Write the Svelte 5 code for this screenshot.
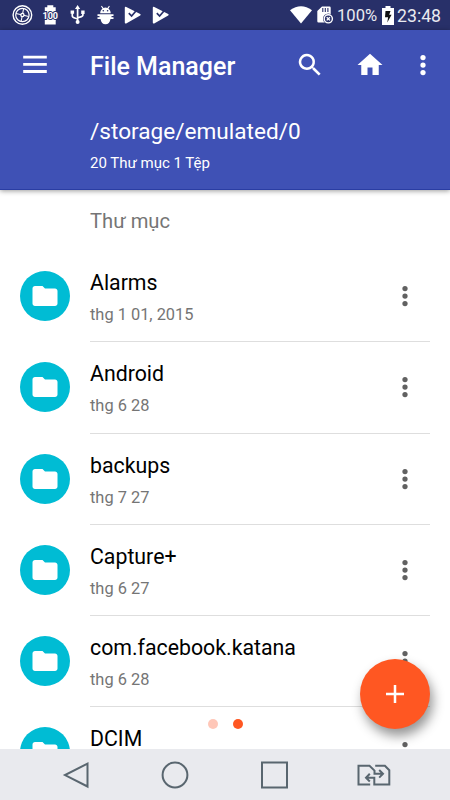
<script lang="ts">
  interface FileEntry {
    readonly name: string;
    readonly modified: string;
  }

  const entries: FileEntry[] = [
    { name: "Alarms", modified: "thg 1 01, 2015" },
    { name: "Android", modified: "thg 6 28" },
    { name: "backups", modified: "thg 7 27" },
    { name: "Capture+", modified: "thg 6 27" },
    { name: "com.facebook.katana", modified: "thg 6 28" },
    { name: "DCIM", modified: "thg 6 28" },
  ];

  let page = $state(1);
</script>

{#snippet more()}
  <svg viewBox="0 0 24 24" width="30" height="30" fill="currentColor">
    <circle cx="12" cy="6" r="2.1" />
    <circle cx="12" cy="12" r="2.1" />
    <circle cx="12" cy="18" r="2.1" />
  </svg>
{/snippet}

{#snippet playCheck()}
  <svg viewBox="0 0 24 24" width="24" height="24">
    <path d="M4.8 5q0-1.700 1.500-1L20.200 11q1.100.700 0 1.400L6.200 20.400q-1.400.6-1.400-.8z" fill="#fff" />
    <path d="M8.800 10.200l2.800 2.800 5.200-6" fill="none" stroke="#283069" stroke-width="1.700" />
  </svg>
{/snippet}

<div class="screen">
  <div class="status">
    <div class="notifications">
      <svg viewBox="0 0 24 24" width="24" height="24" fill="none" stroke="#fff">
        <circle cx="12.4" cy="12" r="9.300" stroke-width="1.400" />
        <circle cx="12.4" cy="12" r="6.700" stroke-width="1.200" />
        <path d="M12.4 12L13.600 5.500M12.4 12l6.300 1.500M12.4 12l-1.300 6.500M12.4 12L6 10.500" stroke-width="1.100" />
        <circle cx="12.4" cy="12" r="2.200" fill="#fff" stroke="none" />
        <circle cx="12.4" cy="12" r=".9" fill="#283069" stroke="none" />
      </svg>
      <svg viewBox="0 0 24 24" width="24" height="24">
        <path d="M9.300 2.300h6v2h2.400v4H6.800v-4h2.500zM6.800 16.800h10.900v4.700H6.800z" fill="#fff" />
        <path d="M7 8h10.500v9.500H7z" fill="#fff" />
        <text x="12.300" y="15.700" text-anchor="middle">100</text>
      </svg>
      <svg viewBox="0 0 24 24" width="24" height="24" fill="none" stroke="#fff" stroke-width="1.700">
        <path d="M12.600 4.500v15M12.600 16.500c0-1.500-5.300-1-5.300-3.500V9M12.600 15.500c0-1.700 5.300-1 5.300-3.500V8" />
        <path d="M12.600 2l2.600 4h-5.200zM5.600 7.500h3.500v3.300H5.600zM16.200 7.500h3.400v3.400h-3.400z" fill="#fff" stroke="none" />
        <circle cx="12.600" cy="19" r="2" fill="#fff" stroke="none" />
      </svg>
      <svg viewBox="0 0 24 24" width="24" height="24" fill="#fff">
        <path d="M7.200 10.200c0-2.200 1-3.700 2.300-4.500L8 3.300l.8-.6 1.700 2.200q1.900-.6 3.900 0L16 2.700l.8.6-1.400 2.400c1.400.8 2.300 2.300 2.300 4.500zM4.500 11.300h16v1.800h-16zM4.500 14.200h16v1.900h-3c-.5 3.500-2.300 5.200-5 5.200s-4.500-1.700-5-5.200h-3z" />
        <path d="M6.500 13h12v2h-12z" />
        <circle cx="10.300" cy="7.800" r=".8" fill="#283069" />
        <circle cx="14.600" cy="7.800" r=".8" fill="#283069" />
      </svg>
      {@render playCheck()}
      {@render playCheck()}
    </div>
    <svg class="wifi" viewBox="0 0 22 18" width="22" height="18">
      <path d="M0 4.200Q11-3.600 22 4.200L11 17.500z" fill="#fff" />
    </svg>
    <svg class="sd" viewBox="0 0 17 18" width="17" height="18">
      <path d="M5 .5h7.500q1.200 0 1.200 1.200V9H8v7.500H1.500Q.3 16.500.3 15.300V5z" fill="#fff" />
      <path d="M5.800 2v4M8.300 2v4M10.900 2v4" stroke="#283069" stroke-width="1.100" />
      <circle cx="11.300" cy="12.800" r="5.300" fill="#283069" />
      <circle cx="11.300" cy="12.800" r="4.100" fill="none" stroke="#fff" stroke-width="1.400" />
      <path d="M9.700 11.200l3.200 3.200M12.900 11.200l-3.200 3.200" stroke="#fff" stroke-width="1.300" />
    </svg>
    <span class="percent">100%</span>
    <svg class="battery" viewBox="0 0 12 19" width="12" height="19">
      <path d="M3.500 0h5v2H12v17H0V2h3.500z" fill="#fff" />
      <path d="M3.500 5h5l-1.300 3.700h2.400L5.300 16.500l.8-5.300H3z" fill="#111" />
    </svg>
    <span class="clock">23:48</span>
  </div>

  <header class="header">
    <div class="toolbar">
      <button class="icon-button" aria-label="Menu">
        <svg viewBox="0 0 30 30" width="30" height="30" fill="#fff">
          <path d="M3.200 5.700h23.600v2.900H3.200zM3.200 12.900h23.600v2.900H3.200zM3.200 20.100h23.600V23H3.200z" />
        </svg>
      </button>
      <h1>File Manager</h1>
      <button class="icon-button search" aria-label="Search">
        <svg viewBox="0 0 24 24" width="30" height="30" fill="#fff">
          <path d="M15.500 14h-.79l-.28-.27A6.500 6.500 0 1 0 13.730 14.430l.27.28v.79l5 4.990L20.490 19l-4.990-5zm-6 0a4.500 4.500 0 1 1 0-9 4.500 4.500 0 0 1 0 9z" />
        </svg>
      </button>
      <button class="icon-button home" aria-label="Home">
        <svg viewBox="0 0 24 24" width="30" height="30" fill="#fff">
          <path d="M10 20v-6h4v6h5v-8h3L12 3 2 12h3v8z" />
        </svg>
      </button>
      <button class="icon-button overflow" aria-label="More">{@render more()}</button>
    </div>
    <div class="path">/storage/emulated/0</div>
    <div class="summary">20 Thư mục 1 Tệp</div>
  </header>

  <main class="content">
    <h2>Thư mục</h2>
    <ul>
      {#each entries as entry (entry.name)}
        <li>
          <span class="folder">
            <svg viewBox="0 0 24 24" width="30" height="30" fill="#fff">
              <path d="M10 4H4c-1.100 0-2 .9-2 2v12c0 1.100.9 2 2 2h16c1.100 0 2-.9 2-2V8c0-1.100-.9-2-2-2h-8z" />
            </svg>
          </span>
          <div class="details">
            <div class="labels">
              <div class="name">{entry.name}</div>
              <div class="date">{entry.modified}</div>
            </div>
            <button class="icon-button item-more" aria-label="Options">{@render more()}</button>
          </div>
        </li>
      {/each}
    </ul>

    <div class="pager">
      {#each [0, 1] as index (index)}
        <button class:active={page === index} aria-label="Page" onclick={() => (page = index)}></button>
      {/each}
    </div>
    <button class="fab" aria-label="Add">
      <svg viewBox="0 0 24 24" width="30" height="30" fill="#fff">
        <path d="M19.200 13h-6.200v6.200h-2V13H4.800v-2H11V4.800h2V11h6.200z" />
      </svg>
    </button>
  </main>

  <nav class="navbar">
    <svg viewBox="0 0 34 30" width="34" height="30">
      <path d="M28.500 3.700v22.800L6 15.100z" />
    </svg>
    <svg viewBox="0 0 34 30" width="34" height="30">
      <circle cx="17" cy="15" r="12.400" />
    </svg>
    <svg viewBox="0 0 34 30" width="34" height="30">
      <path d="M4 2.500H29V27.500H4z" />
    </svg>
    <svg viewBox="0 0 34 30" width="34" height="30">
      <path d="M13.200 24.400H1.500V5.700h11l5 4.900v3.200h8M22.200 10l3.800 3.800-3.800 3.800M18.200 5.700h9.700l4.400 4.500v14.200H17.300v-6.700H9M12.800 13.800L9 17.700l3.800 3.800" />
    </svg>
  </nav>
</div>

<style>
  :global(body) {
    margin: 0;
    background: #fff;
  }

  .screen {
    display: flex;
    flex-direction: column;
    width: 450px;
    height: 800px;
    overflow: hidden;
    font-family: Roboto, "Noto Sans", sans-serif;
    color: #000;
    background: #fff;
  }

  svg {
    display: block;
    flex: none;
  }

  button {
    border: 0;
    padding: 0;
    color: inherit;
    background: none;
    cursor: pointer;
  }

  .status {
    display: flex;
    align-items: center;
    flex: none;
    box-sizing: border-box;
    height: 30px;
    padding: 0 9px 0 10px;
    color: #e9eaf0;
    background: #283069;
  }

  .notifications {
    display: flex;
    gap: 3.6px;
    margin-right: auto;
    padding-top: 3px;
    height: 27px;
  }

  .notifications text {
    font: 700 9px Roboto, sans-serif;
    fill: #fff;
    stroke: #283069;
    stroke-width: 2px;
    paint-order: stroke;
  }

  .sd {
    margin: 0 3px 0 5px;
  }

  .percent {
    width: 41px;
    padding-top: 1px;
    font-size: 16.6px;
  }

  .battery {
    margin: 0 3px 0 4px;
  }

  .clock {
    width: 44px;
    padding-top: 1px;
    font-size: 17.7px;
  }

  .header {
    position: relative;
    flex: none;
    box-sizing: border-box;
    height: 160px;
    border-bottom: 1px solid #2a3da3;
    color: #fff;
    background: #3f51b5;
    box-shadow: 0 1px 5px rgba(0, 0, 0, 0.4);
  }

  .toolbar {
    display: flex;
    align-items: center;
    height: 70px;
    padding: 0 12.5px 0 20px;
  }

  h1 {
    flex: 1;
    margin: 4px 0 0 40px;
    font-size: 25px;
    font-weight: 500;
    line-height: 30px;
  }

  .home {
    margin: 0 22.5px 0 30px;
  }

  .path {
    margin: 17px 0 0 90px;
    font-size: 22.6px;
    line-height: 30px;
  }

  .summary {
    margin: 6px 0 0 90px;
    font-size: 15px;
    line-height: 20px;
  }

  .content {
    position: relative;
    flex: 1;
    min-height: 0;
    overflow: hidden;
  }

  h2 {
    margin: 0;
    height: 61px;
    padding-left: 90px;
    font-size: 20.2px;
    font-weight: 400;
    line-height: 62px;
    color: #757575;
  }

  ul {
    margin: 0;
    padding: 0;
    list-style: none;
  }

  li {
    display: flex;
    align-items: center;
    height: 91.25px;
    padding: 0 20px;
  }

  .folder {
    display: grid;
    place-items: center;
    width: 50px;
    height: 50px;
    margin-bottom: 1.2px;
    border-radius: 50%;
    background: #00bcd4;
  }

  .details {
    display: flex;
    flex: 1;
    align-items: center;
    box-sizing: border-box;
    height: 100%;
    margin-left: 20px;
    border-bottom: 1px solid #dedede;
  }

  .labels {
    flex: 1;
    padding-top: 3px;
  }

  .name {
    font-size: 21.3px;
    line-height: 30px;
  }

  .date {
    margin-top: 5px;
    font-size: 16.4px;
    line-height: 24px;
    color: #757575;
  }

  .item-more {
    margin-right: 10px;
    color: #616161;
  }

  .pager {
    position: absolute;
    bottom: 20px;
    left: 207.5px;
    display: flex;
    gap: 15px;
  }

  .pager button {
    width: 10px;
    height: 10px;
    border-radius: 50%;
    background: #ffc7b8;
  }

  .pager .active {
    background: #ff5722;
  }

  .fab {
    position: absolute;
    right: 20px;
    bottom: 20px;
    display: grid;
    place-items: center;
    width: 70px;
    height: 70px;
    border-radius: 50%;
    background: #ff5722;
    box-shadow: 3px 7px 12px rgba(0, 0, 0, 0.42);
  }

  .navbar {
    display: flex;
    gap: 65.5px;
    flex: none;
    box-sizing: border-box;
    height: 51px;
    padding: 11px 0 0 58.5px;
    background: #e9eaee;
  }

  .navbar svg {
    fill: none;
    stroke: #59666f;
    stroke-width: 2;
  }
</style>
